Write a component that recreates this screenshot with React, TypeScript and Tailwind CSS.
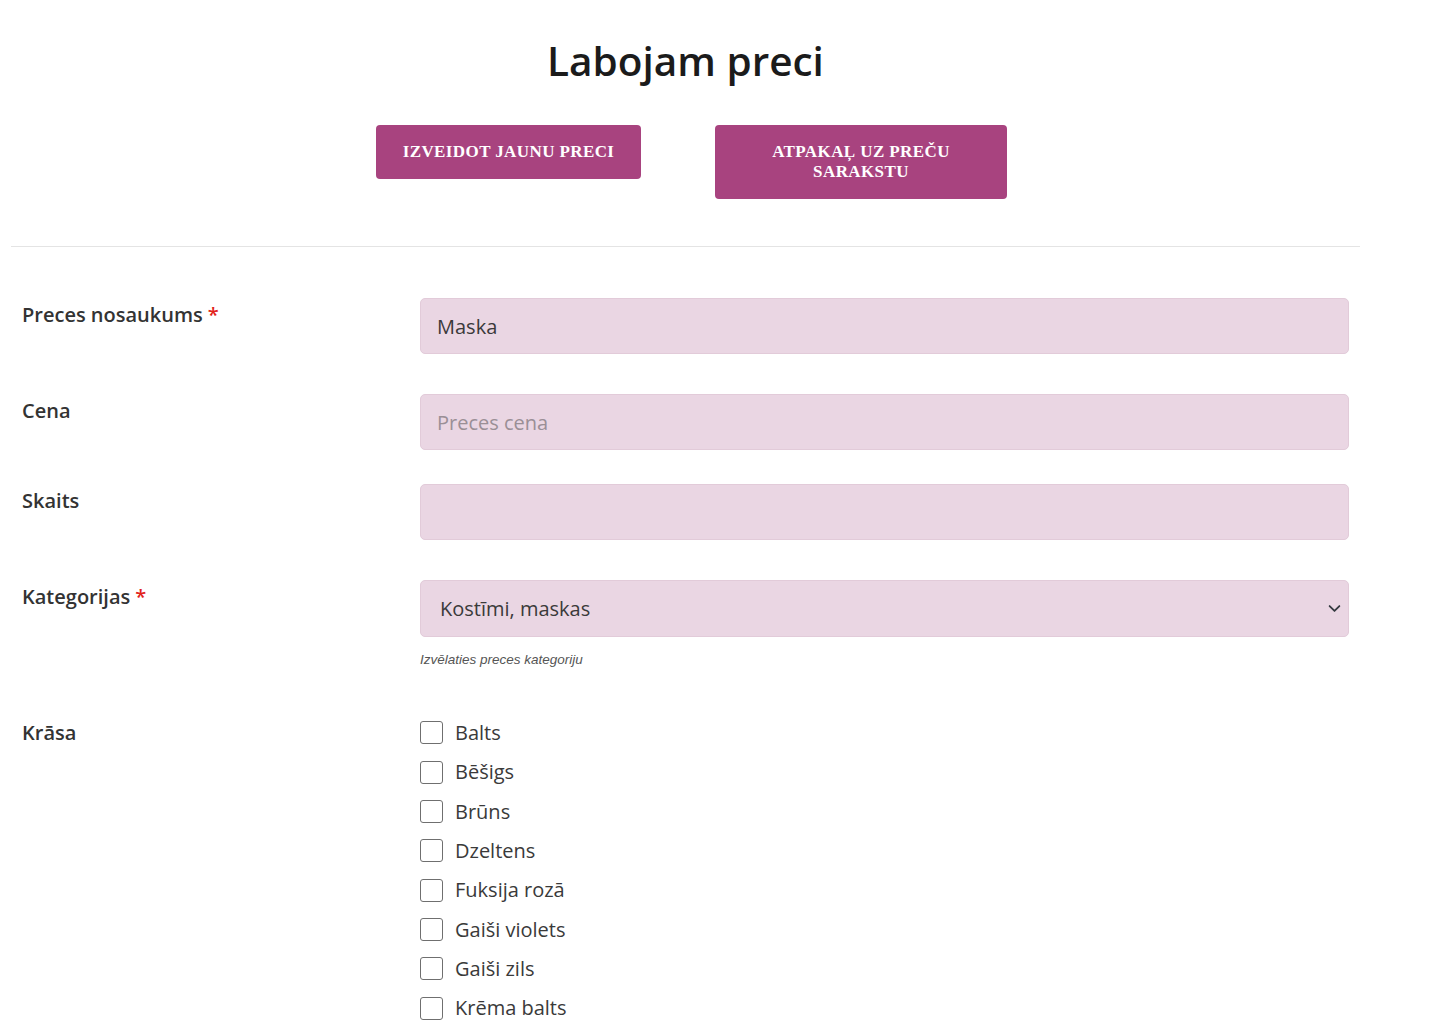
import React from "react";

const colors = [
  "Balts",
  "Bēšigs",
  "Brūns",
  "Dzeltens",
  "Fuksija rozā",
  "Gaiši violets",
  "Gaiši zils",
  "Krēma balts",
];

const inputCls =
  "w-full h-[56px] rounded-[5px] bg-[#ead6e3] border border-[#e2cbd9] px-[16px] text-[20px] text-[#3a3a3a] placeholder:text-[#9a8f96] outline-none";

function Label({ text, req, extra }: { text: string; req?: boolean; extra?: string }) {
  return (
    <div className={"w-[409px] shrink-0 pl-[11px] text-[20px] leading-[30px] font-semibold text-[#333] " + (extra ?? "pt-[2px]")}>
      {text}
      {req && <span className="text-[#e2231a] ml-[5px]">*</span>}
    </div>
  );
}

export default function App() {
  return (
    <div className="w-[1433px] h-[1030px] bg-white overflow-hidden" style={{ fontFamily: '"Open Sans", sans-serif' }}>
      <div className="w-[1360px] pl-[11px]">
        <h1 className="text-center text-[40.5px] font-semibold text-[#1b1b1b] pt-[33px] leading-[56px]">Labojam preci</h1>
        <div className="flex justify-center gap-[74px] mt-[36px] pl-[12px]">
          <button
            className="w-[265px] h-[54px] rounded-[4px] bg-[#a8437f] text-white text-[17px] font-bold uppercase tracking-[0.4px] leading-[20px]"
            style={{ fontFamily: '"Liberation Serif", serif' }}
          >
            Izveidot jaunu preci
          </button>
          <button
            className="w-[292px] h-[74px] rounded-[4px] bg-[#a8437f] text-white text-[17px] font-bold uppercase tracking-[0.4px] leading-[20px] px-[40px]"
            style={{ fontFamily: '"Liberation Serif", serif' }}
          >
            Atpakaļ uz preču sarakstu
          </button>
        </div>
        <div className="mt-[47px] w-[1349px] border-t border-[#e4e4e4]" />

        <div className="flex mt-[51px]">
          <Label text="Preces nosaukums" req />
          <div className="w-[929px]">
            <input className={inputCls} defaultValue="Maska" />
          </div>
        </div>
        <div className="flex mt-[40px]">
          <Label text="Cena" />
          <div className="w-[929px]">
            <input className={inputCls} placeholder="Preces cena" />
          </div>
        </div>
        <div className="flex mt-[34px]">
          <Label text="Skaits" />
          <div className="w-[929px]">
            <input className={inputCls} />
          </div>
        </div>
        <div className="flex mt-[40px]">
          <Label text="Kategorijas" req />
          <div className="w-[929px]">
            <div className="relative">
              <div className="w-full h-[57px] rounded-[5px] bg-[#ead6e3] border border-[#e2cbd9] pl-[19px] flex items-center text-[20px] text-[#3a3a3a]">
                Kostīmi, maskas
              </div>
              <svg className="absolute right-[8px] top-[22px]" width="13" height="13" viewBox="0 0 16 16">
                <path d="M2 5l6 6 6-6" fill="none" stroke="#343a40" strokeWidth="2.2" strokeLinecap="round" strokeLinejoin="round" />
              </svg>
            </div>
            <div className="mt-[13px] text-[13.5px] italic text-[#555]" style={{ fontFamily: '"Liberation Sans", Arial, sans-serif' }}>
              Izvēlaties preces kategoriju
            </div>
          </div>
        </div>
        <div className="flex mt-[43px]">
          <Label text="Krāsa" extra="pt-[5px]" />
          <div className="w-[929px] flex flex-col">
            {colors.map((c) => (
              <label key={c} className="flex items-center h-[39.35px] text-[20px] text-[#3a3a3a] shrink-0">
                <span className="w-[23px] h-[23px] rounded-[3px] border border-[#6f6f6f] bg-white mr-[12px]" />
                {c}
              </label>
            ))}
          </div>
        </div>
      </div>
    </div>
  );
}
